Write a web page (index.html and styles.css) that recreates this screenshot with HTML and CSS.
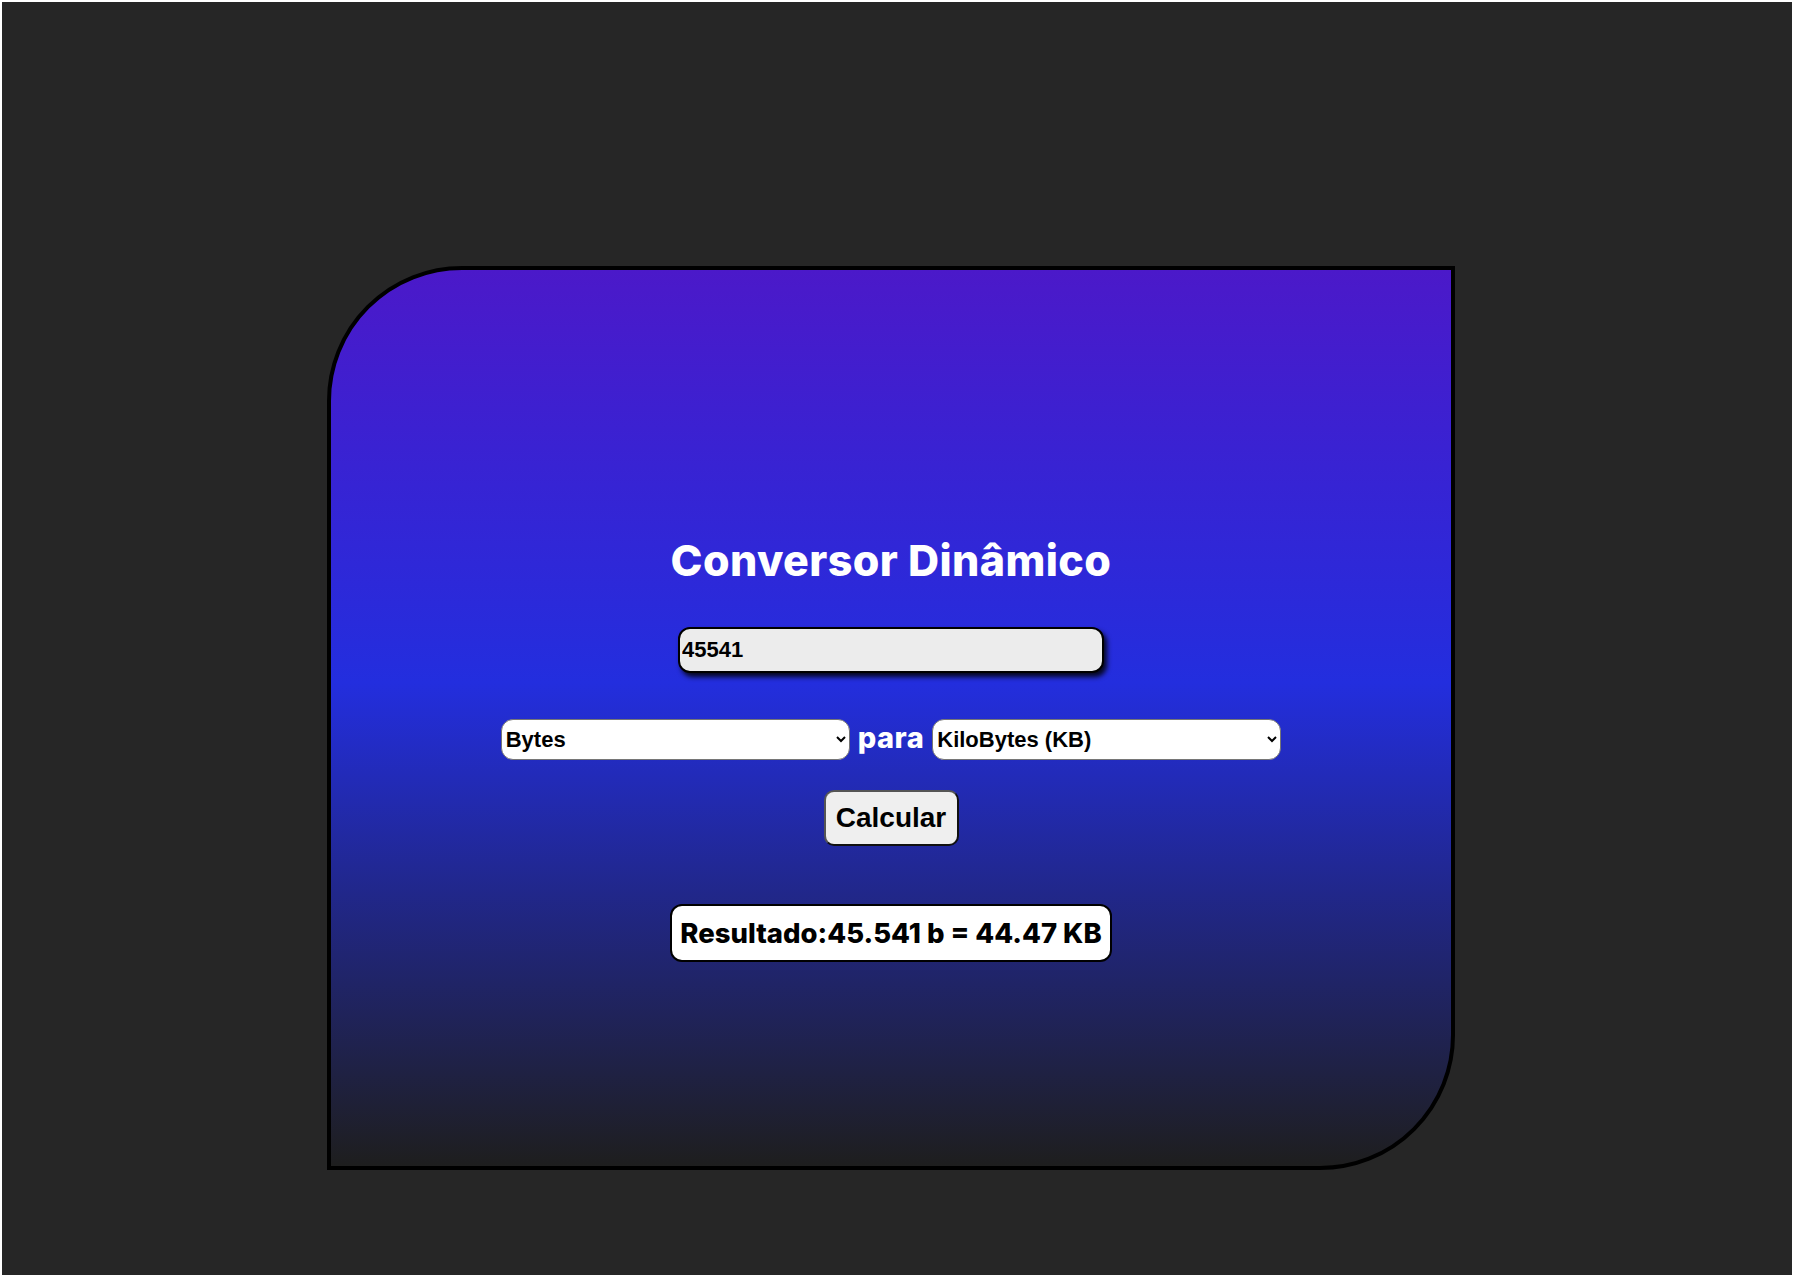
FILE: index.html
```html
<!DOCTYPE html>
<html lang="pt-BR">
<head>
<meta charset="utf-8">
<title>Conversor Dinâmico</title>
<link rel="stylesheet" href="styles.css">
</head>
<body>
<main class="stage">
  <section class="card">
    <h1 class="title">Conversor Dinâmico</h1>
    <input class="value-input" type="text" value="45541">
    <div class="units-row">
      <select class="unit-select">
        <option>Bytes</option>
        <option>KiloBytes (KB)</option>
      </select>
      <span class="para">para</span>
      <select class="unit-select">
        <option>KiloBytes (KB)</option>
        <option>Bytes</option>
      </select>
    </div>
    <button class="calc-btn" type="button">Calcular</button>
    <div class="result">Resultado:45.541 b = 44.47 KB</div>
  </section>
</main>
</body>
</html>
```
FILE: styles.css
```css
html {
  background: #ffffff;
}
body {
  margin: 2px;
  height: 1273px;
  background: #262626;
  overflow: hidden;
}
.stage {
  padding: 264px 0 0 325px;
}
.card {
  box-sizing: border-box;
  width: 1128px;
  height: 904px;
  border: 4px solid #000;
  border-radius: 135px 0 135px 0;
  background: linear-gradient(180deg, #4b19c9 0%, #232ede 46%, #1e1e1e 100%);
  display: flex;
  flex-direction: column;
  align-items: center;
  padding-top: 265px;
}
.title {
  margin: 0;
  font-family: Inter, "Noto Sans", sans-serif;
  font-weight: 800;
  font-size: 43px;
  letter-spacing: 0.4px;
  line-height: 50px;
  color: #fff;
}
.value-input {
  box-sizing: border-box;
  margin-top: 42px;
  width: 426px;
  height: 46px;
  border: 2px solid #000;
  border-radius: 12px;
  background: #ececec;
  box-shadow: 3px 4px 5px rgba(0, 0, 0, 0.85);
  padding: 0 2px;
  font-family: "Liberation Sans", Arial, sans-serif;
  font-weight: 700;
  font-size: 22px;
  color: #000;
  outline: none;
}
.units-row {
  margin-top: 46px;
  display: flex;
  align-items: center;
  gap: 8px;
  height: 41px;
}
.unit-select {
  box-sizing: border-box;
  width: 349px;
  height: 41px;
  border: 1px solid #767676;
  border-radius: 12px;
  background: #fff;
  padding: 0 6px 0 0;
  font-family: "Liberation Sans", Arial, sans-serif;
  font-weight: 700;
  font-size: 22px;
  color: #000;
}
.para {
  font-family: Inter, "Noto Sans", sans-serif;
  font-weight: 800;
  font-size: 29px;
  letter-spacing: 0.5px;
  color: #fff;
  line-height: 41px;
  margin-top: -4px;
}
.calc-btn {
  box-sizing: border-box;
  margin-top: 30px;
  width: 135px;
  height: 56px;
  border: 2px solid;
  border-color: #555 #111 #111 #555;
  border-radius: 10px;
  background: #efefef;
  font-family: "Liberation Sans", Arial, sans-serif;
  font-weight: 700;
  font-size: 28px;
  color: #000;
  padding: 0;
}
.result {
  box-sizing: border-box;
  margin-top: 58px;
  width: 442px;
  height: 58px;
  border: 2px solid #000;
  border-radius: 12px;
  background: #fff;
  font-family: Inter, "Noto Sans", sans-serif;
  font-weight: 800;
  font-size: 27.5px;
  line-height: 54px;
  text-align: center;
  color: #000;
  white-space: nowrap;
}
```
